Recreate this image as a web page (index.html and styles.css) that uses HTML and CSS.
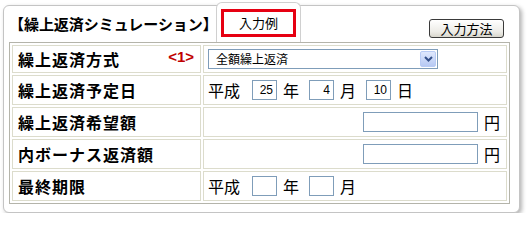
FILE: index.html
```html
<!DOCTYPE html>
<html lang="ja">
<head>
<meta charset="utf-8">
<link rel="stylesheet" href="styles.css">
</head>
<body>
<div class="card">
  <div class="header">
    <div class="title">【繰上返済シミュレーション】</div>
    <div class="tab"><div class="example">入力例</div></div>
    <button class="howto">入力方法</button>
  </div>
  <table class="sim">
    <tr class="r1">
      <th><span class="lbl">繰上返済方式</span><span class="note">&lt;1&gt;</span></th>
      <td>
        <div class="select">
          <span class="sel-text">全額繰上返済</span>
          <span class="sel-btn"><svg width="9" height="6" viewBox="0 0 9 6"><path d="M1 1 L4.5 4.5 L8 1" fill="none" stroke="#34508a" stroke-width="2"/></svg></span>
        </div>
      </td>
    </tr>
    <tr>
      <th><span class="lbl">繰上返済予定日</span></th>
      <td><div class="line"><span>平成</span><input class="num" value="25"><span>年</span><input class="num" value="4"><span>月</span><input class="num" value="10"><span>日</span></div></td>
    </tr>
    <tr>
      <th><span class="lbl">繰上返済希望額</span></th>
      <td><div class="line right"><input class="amt" value=""><span>円</span></div></td>
    </tr>
    <tr>
      <th><span class="lbl">内ボーナス返済額</span></th>
      <td><div class="line right"><input class="amt" value=""><span>円</span></div></td>
    </tr>
    <tr>
      <th><span class="lbl">最終期限</span></th>
      <td><div class="line"><span>平成</span><input class="num" value=""><span>年</span><input class="num" value=""><span>月</span></div></td>
    </tr>
  </table>
</div>
</body>
</html>
```

FILE: styles.css
```css
html, body {
  margin: 0;
  background: #ffffff;
}
body {
  padding: 5px 0 0 3px;
  font-family: "Noto Sans CJK JP", "Noto Sans", sans-serif;
  color: #000;
}
.card {
  width: 515px;
  height: 206px;
  border: 1px solid #c4c4c4;
  border-radius: 6px;
  box-shadow: 2px 2px 4px rgba(0,0,0,0.3);
  background: #fff;
}
.header {
  display: flex;
  align-items: flex-start;
  height: 36px;
}
.title {
  width: 207px;
  margin-left: 5px;
  margin-top: 8px;
  font-size: 15px;
  line-height: 20px;
  font-weight: bold;
  letter-spacing: -0.05px;
  white-space: nowrap;
}
.tab {
  margin-top: -4px;
  height: 40px;
  box-sizing: border-box;
  border: 1px solid #d0d0d0;
  border-bottom: none;
  border-radius: 6px 6px 0 0;
  background: #fff;
  padding: 6px 4px 0 4px;
}
.example {
  width: 75px;
  height: 28px;
  box-sizing: border-box;
  border: 3px solid #e60012;
  font-size: 13px;
  line-height: 22px;
  text-align: center;
}
.howto {
  margin-left: auto;
  margin-right: 15px;
  margin-top: 13px;
  width: 75px;
  height: 19px;
  padding: 0;
  border: 1px solid #3a3a3a;
  border-radius: 3px;
  background: linear-gradient(#ffffff, #ecebe6 70%, #d8d6cc);
  font-family: "Noto Sans CJK JP", sans-serif;
  font-size: 13px;
  line-height: 17px;
  color: #000;
}
.sim {
  margin-left: 5px;
  width: 501px;
  border: 1px solid #b4b4aa;
  border-spacing: 2px;
}
.sim th, .sim td {
  border: 1px solid #dcdccc;
  height: 28px;
  padding: 0;
  box-sizing: border-box;
}
.sim tr.r1 th, .sim tr.r1 td {
  height: 28px;
}
.sim tr + tr th, .sim tr + tr td {
  height: 30px;
}
.sim th {
  width: 189px;
  text-align: left;
  font-weight: bold;
  padding-left: 5px;
  padding-right: 6px;
}
.sim th .lbl {
  font-size: 16px;
  letter-spacing: 1px;
  line-height: 20px;
}
.note {
  float: right;
  color: #c00000;
  font-family: "Liberation Sans", Arial, sans-serif;
  font-size: 15px;
  font-weight: bold;
  line-height: 20px;
  letter-spacing: 0;
}
.sim td {
  padding-left: 4px;
  padding-right: 6px;
}
.select {
  display: flex;
  align-items: center;
  width: 230px;
  height: 20px;
  box-sizing: border-box;
  border: 1px solid #7f9db9;
  padding: 1px;
  background: #fff;
}
.sel-text {
  flex: 1;
  font-size: 12px;
  line-height: 16px;
  padding-left: 6px;
}
.sel-btn {
  width: 16px;
  height: 16px;
  display: flex;
  align-items: center;
  justify-content: center;
  box-sizing: border-box;
  border: 1px solid #b8cbf5;
  border-radius: 2px;
  background: linear-gradient(#dfe8fd, #b7c9f3);
}
.line {
  display: flex;
  align-items: center;
  font-size: 16px;
  line-height: 20px;
}
.line.right {
  justify-content: flex-end;
}
.line span {
  display: block;
}
.num {
  width: 25px;
  height: 20px;
  box-sizing: border-box;
  border: 1px solid #7f9db9;
  padding: 0 3px;
  margin: 0 6px 0 10px;
  font-family: "Liberation Sans", Arial, sans-serif;
  font-size: 12px;
  text-align: right;
  outline: none;
}
.line span:first-child + .num {
  margin-left: 12px;
}
.amt {
  width: 115px;
  height: 20px;
  box-sizing: border-box;
  border: 1px solid #7f9db9;
  margin-right: 6px;
  padding: 0 3px;
  outline: none;
}
```
